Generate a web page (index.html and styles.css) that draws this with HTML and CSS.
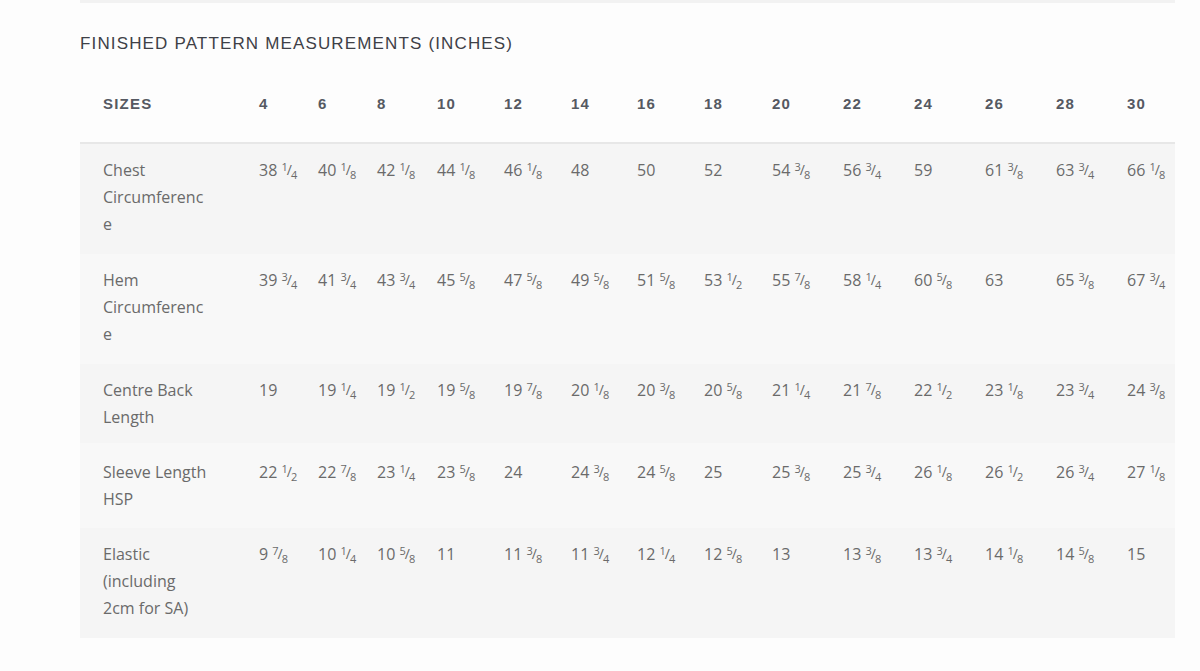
FILE: index.html
```html
<!DOCTYPE html>
<html lang="en">
<head>
<meta charset="utf-8">
<title>Finished Pattern Measurements</title>
<link rel="stylesheet" href="styles.css">
</head>
<body>
<div class="page">
  <div class="topbar"></div>
  <h2 class="title">FINISHED PATTERN MEASUREMENTS (INCHES)</h2>
  <table class="sizes">
    <colgroup>
      <col class="c-label">
      <col class="c59"><col class="c59"><col class="c60"><col class="c67"><col class="c67"><col class="c66"><col class="c67"><col class="c68"><col class="c71"><col class="c71"><col class="c71"><col class="c71"><col class="c71"><col class="c48">
    </colgroup>
    <thead>
      <tr>
        <th>SIZES</th><th>4</th><th>6</th><th>8</th><th>10</th><th>12</th><th>14</th><th>16</th><th>18</th><th>20</th><th>22</th><th>24</th><th>26</th><th>28</th><th>30</th>
      </tr>
    </thead>
    <tbody>
      <tr class="r1">
        <td>Chest Circumference</td>
        <td>38 <span class="fr"><span class="n">1</span><span class="s">/</span><span class="d">4</span></span></td>
        <td>40 <span class="fr"><span class="n">1</span><span class="s">/</span><span class="d">8</span></span></td>
        <td>42 <span class="fr"><span class="n">1</span><span class="s">/</span><span class="d">8</span></span></td>
        <td>44 <span class="fr"><span class="n">1</span><span class="s">/</span><span class="d">8</span></span></td>
        <td>46 <span class="fr"><span class="n">1</span><span class="s">/</span><span class="d">8</span></span></td>
        <td>48</td>
        <td>50</td>
        <td>52</td>
        <td>54 <span class="fr"><span class="n">3</span><span class="s">/</span><span class="d">8</span></span></td>
        <td>56 <span class="fr"><span class="n">3</span><span class="s">/</span><span class="d">4</span></span></td>
        <td>59</td>
        <td>61 <span class="fr"><span class="n">3</span><span class="s">/</span><span class="d">8</span></span></td>
        <td>63 <span class="fr"><span class="n">3</span><span class="s">/</span><span class="d">4</span></span></td>
        <td>66 <span class="fr"><span class="n">1</span><span class="s">/</span><span class="d">8</span></span></td>
      </tr>
      <tr class="r2">
        <td>Hem Circumference</td>
        <td>39 <span class="fr"><span class="n">3</span><span class="s">/</span><span class="d">4</span></span></td>
        <td>41 <span class="fr"><span class="n">3</span><span class="s">/</span><span class="d">4</span></span></td>
        <td>43 <span class="fr"><span class="n">3</span><span class="s">/</span><span class="d">4</span></span></td>
        <td>45 <span class="fr"><span class="n">5</span><span class="s">/</span><span class="d">8</span></span></td>
        <td>47 <span class="fr"><span class="n">5</span><span class="s">/</span><span class="d">8</span></span></td>
        <td>49 <span class="fr"><span class="n">5</span><span class="s">/</span><span class="d">8</span></span></td>
        <td>51 <span class="fr"><span class="n">5</span><span class="s">/</span><span class="d">8</span></span></td>
        <td>53 <span class="fr"><span class="n">1</span><span class="s">/</span><span class="d">2</span></span></td>
        <td>55 <span class="fr"><span class="n">7</span><span class="s">/</span><span class="d">8</span></span></td>
        <td>58 <span class="fr"><span class="n">1</span><span class="s">/</span><span class="d">4</span></span></td>
        <td>60 <span class="fr"><span class="n">5</span><span class="s">/</span><span class="d">8</span></span></td>
        <td>63</td>
        <td>65 <span class="fr"><span class="n">3</span><span class="s">/</span><span class="d">8</span></span></td>
        <td>67 <span class="fr"><span class="n">3</span><span class="s">/</span><span class="d">4</span></span></td>
      </tr>
      <tr class="r3">
        <td>Centre Back Length</td>
        <td>19</td>
        <td>19 <span class="fr"><span class="n">1</span><span class="s">/</span><span class="d">4</span></span></td>
        <td>19 <span class="fr"><span class="n">1</span><span class="s">/</span><span class="d">2</span></span></td>
        <td>19 <span class="fr"><span class="n">5</span><span class="s">/</span><span class="d">8</span></span></td>
        <td>19 <span class="fr"><span class="n">7</span><span class="s">/</span><span class="d">8</span></span></td>
        <td>20 <span class="fr"><span class="n">1</span><span class="s">/</span><span class="d">8</span></span></td>
        <td>20 <span class="fr"><span class="n">3</span><span class="s">/</span><span class="d">8</span></span></td>
        <td>20 <span class="fr"><span class="n">5</span><span class="s">/</span><span class="d">8</span></span></td>
        <td>21 <span class="fr"><span class="n">1</span><span class="s">/</span><span class="d">4</span></span></td>
        <td>21 <span class="fr"><span class="n">7</span><span class="s">/</span><span class="d">8</span></span></td>
        <td>22 <span class="fr"><span class="n">1</span><span class="s">/</span><span class="d">2</span></span></td>
        <td>23 <span class="fr"><span class="n">1</span><span class="s">/</span><span class="d">8</span></span></td>
        <td>23 <span class="fr"><span class="n">3</span><span class="s">/</span><span class="d">4</span></span></td>
        <td>24 <span class="fr"><span class="n">3</span><span class="s">/</span><span class="d">8</span></span></td>
      </tr>
      <tr class="r4">
        <td>Sleeve Length HSP</td>
        <td>22 <span class="fr"><span class="n">1</span><span class="s">/</span><span class="d">2</span></span></td>
        <td>22 <span class="fr"><span class="n">7</span><span class="s">/</span><span class="d">8</span></span></td>
        <td>23 <span class="fr"><span class="n">1</span><span class="s">/</span><span class="d">4</span></span></td>
        <td>23 <span class="fr"><span class="n">5</span><span class="s">/</span><span class="d">8</span></span></td>
        <td>24</td>
        <td>24 <span class="fr"><span class="n">3</span><span class="s">/</span><span class="d">8</span></span></td>
        <td>24 <span class="fr"><span class="n">5</span><span class="s">/</span><span class="d">8</span></span></td>
        <td>25</td>
        <td>25 <span class="fr"><span class="n">3</span><span class="s">/</span><span class="d">8</span></span></td>
        <td>25 <span class="fr"><span class="n">3</span><span class="s">/</span><span class="d">4</span></span></td>
        <td>26 <span class="fr"><span class="n">1</span><span class="s">/</span><span class="d">8</span></span></td>
        <td>26 <span class="fr"><span class="n">1</span><span class="s">/</span><span class="d">2</span></span></td>
        <td>26 <span class="fr"><span class="n">3</span><span class="s">/</span><span class="d">4</span></span></td>
        <td>27 <span class="fr"><span class="n">1</span><span class="s">/</span><span class="d">8</span></span></td>
      </tr>
      <tr class="r5">
        <td>Elastic (including 2cm for SA)</td>
        <td>9 <span class="fr"><span class="n">7</span><span class="s">/</span><span class="d">8</span></span></td>
        <td>10 <span class="fr"><span class="n">1</span><span class="s">/</span><span class="d">4</span></span></td>
        <td>10 <span class="fr"><span class="n">5</span><span class="s">/</span><span class="d">8</span></span></td>
        <td>11</td>
        <td>11 <span class="fr"><span class="n">3</span><span class="s">/</span><span class="d">8</span></span></td>
        <td>11 <span class="fr"><span class="n">3</span><span class="s">/</span><span class="d">4</span></span></td>
        <td>12 <span class="fr"><span class="n">1</span><span class="s">/</span><span class="d">4</span></span></td>
        <td>12 <span class="fr"><span class="n">5</span><span class="s">/</span><span class="d">8</span></span></td>
        <td>13</td>
        <td>13 <span class="fr"><span class="n">3</span><span class="s">/</span><span class="d">8</span></span></td>
        <td>13 <span class="fr"><span class="n">3</span><span class="s">/</span><span class="d">4</span></span></td>
        <td>14 <span class="fr"><span class="n">1</span><span class="s">/</span><span class="d">8</span></span></td>
        <td>14 <span class="fr"><span class="n">5</span><span class="s">/</span><span class="d">8</span></span></td>
        <td>15</td>
      </tr>
    </tbody>
  </table>
</div>
</body>
</html>
```

FILE: styles.css
```css
* { box-sizing: border-box; }

html, body {
  margin: 0;
  padding: 0;
  background: #fdfdfd;
}

.page {
  margin-left: 80px;
  width: 1095px;
}

.topbar {
  height: 3px;
  background: #f2f2f2;
}

.title {
  margin: 31px 0 0 0;
  font-family: "Liberation Sans", Arial, sans-serif;
  font-weight: normal;
  font-size: 17px;
  line-height: 20px;
  letter-spacing: 1.15px;
  color: #3e4047;
}

.sizes {
  margin-top: 12px;
  width: 1095px;
  table-layout: fixed;
  border-collapse: collapse;
  border-spacing: 0;
}

.c-label { width: 179px; }
.c59 { width: 59px; }
.c60 { width: 60px; }
.c66 { width: 66px; }
.c67 { width: 67px; }
.c68 { width: 68px; }
.c71 { width: 71px; }
.c48 { width: 48px; }

.sizes th {
  text-align: left;
  padding: 24px 0 25px 0;
  font-family: "Liberation Sans", Arial, sans-serif;
  font-weight: bold;
  font-size: 15px;
  line-height: 27px;
  letter-spacing: 1.2px;
  color: #555962;
  border-bottom: 2px solid #e7e7e7;
  white-space: nowrap;
}

.sizes th:first-child,
.sizes td:first-child {
  padding-left: 23px;
  padding-right: 50px;
}

.sizes td {
  vertical-align: top;
  text-align: left;
  padding: 13px 0 16px 0;
  font-family: "Open Sans", "Noto Sans", sans-serif;
  font-size: 16px;
  line-height: 27px;
  color: #6a6a6a;
  overflow-wrap: break-word;
  word-wrap: break-word;
  white-space: normal;
}

.sizes td:not(:first-child) {
  white-space: nowrap;
}

.sizes tbody tr:nth-child(odd) { background: #f5f5f5; }
.sizes tbody tr:nth-child(even) { background: #f8f8f8; }

.sizes tbody tr.r3 td { padding-bottom: 12px; }
.sizes tbody tr.r4 td { padding-top: 16px; padding-bottom: 15px; }

.fr {
  display: inline-block;
  font-size: 11px;
  line-height: 10px;
  white-space: nowrap;
}

.fr .n {
  position: relative;
  top: -5px;
}

.fr .s {
  display: inline-block;
  margin: 0 -1px;
  font-size: 14px;
  position: relative;
  top: -1px;
}

.fr .d {
  position: relative;
  top: 3px;
}
```
